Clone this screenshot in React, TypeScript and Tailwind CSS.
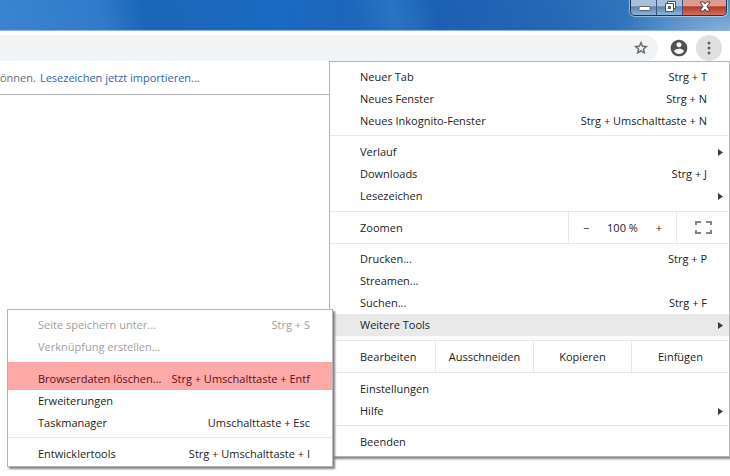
import React from "react";

type ItemProps = {
  label: string;
  shortcut?: string;
  submenu?: boolean;
  active?: boolean;
  disabled?: boolean;
};

function Arrow() {
  return (
    <svg className="absolute top-2 right-[6px] h-[7px] w-[5px]" viewBox="0 0 5 7" aria-hidden="true">
      <path d="M0 0v7l5-3.5z" fill="#3c3c3c" />
    </svg>
  );
}

function Item({ label, shortcut, submenu, active, disabled }: ItemProps) {
  return (
    <button
      type="button"
      role="menuitem"
      disabled={disabled}
      className={
        "relative flex h-[22px] w-full items-center justify-between pr-[22px] pl-[30px] " +
        (active ? "bg-[#e9e9e9] " : "") +
        (disabled ? "text-[#a0a0a0]" : "")
      }
    >
      <span>{label}</span>
      {shortcut && <span>{shortcut}</span>}
      {submenu && <Arrow />}
    </button>
  );
}

function Separator() {
  return <div role="separator" className="mt-[3px] mb-[5px] h-px bg-[#e8e8e8]" />;
}

function ToolsMenu() {
  return (
    <div
      role="menu"
      aria-label="Weitere Tools"
      className="absolute top-[309px] left-[7px] w-[326px] border border-[#b4b4b4] bg-white py-1 pb-px shadow-[2px_2px_2px_#808080]"
    >
      <Item label="Seite speichern unter..." shortcut="Strg + S" disabled />
      <Item label="Verknüpfung erstellen..." disabled />
      <div className="mt-1 bg-[#ffa8a8] pt-[6px] text-[#5a0f1c]">
        <Item label="Browserdaten löschen..." shortcut="Strg + Umschalttaste + Entf" />
      </div>
      <Item label="Erweiterungen" />
      <Item label="Taskmanager" shortcut="Umschalttaste + Esc" />
      <Separator />
      <Item label="Entwicklertools" shortcut="Strg + Umschalttaste + I" />
    </div>
  );
}

function MainMenu() {
  return (
    <div
      role="menu"
      aria-label="Menü"
      className="absolute top-[61px] right-0 w-[401px] border border-[#b4b4b4] bg-white pt-1 pb-[3px] shadow-[2px_2px_2px_#808080]"
    >
      <Item label="Neuer Tab" shortcut="Strg + T" />
      <Item label="Neues Fenster" shortcut="Strg + N" />
      <Item label="Neues Inkognito-Fenster" shortcut="Strg + Umschalttaste + N" />
      <Separator />
      <Item label="Verlauf" submenu />
      <Item label="Downloads" shortcut="Strg + J" />
      <Item label="Lesezeichen" submenu />
      <div className="my-1 flex h-[33px] items-stretch border-y border-[#e8e8e8]">
        <span className="flex flex-1 items-center pl-[30px]">Zoomen</span>
        <div className="flex w-[108px] items-center justify-between border-l border-[#e8e8e8] px-[14px]">
          <button type="button" aria-label="Verkleinern">−</button>
          <span>100 %</span>
          <button type="button" aria-label="Vergrößern">+</button>
        </div>
        <button
          type="button"
          aria-label="Vollbild"
          className="flex w-[53px] items-center justify-center border-l border-[#e8e8e8]"
        >
          <svg className="h-[13px] w-[17px]" viewBox="0 0 17 13" fill="none" stroke="#858585" strokeWidth="2" aria-hidden="true">
            <path d="M1 4V1h5M11 1h5v3M16 9v3h-5M6 12H1V9" />
          </svg>
        </button>
      </div>
      <Item label="Drucken..." shortcut="Strg + P" />
      <Item label="Streamen..." />
      <Item label="Suchen..." shortcut="Strg + F" />
      <Item label="Weitere Tools" submenu active />
      <div className="mt-1 mb-[5px] flex h-[33px] items-stretch border-y border-[#e8e8e8]">
        <span className="flex flex-1 items-center pl-[30px]">Bearbeiten</span>
        <button type="button" className="w-[98px] border-l border-[#e8e8e8]">Ausschneiden</button>
        <button type="button" className="w-[98px] border-l border-[#e8e8e8]">Kopieren</button>
        <button type="button" className="w-[98px] border-l border-[#e8e8e8]">Einfügen</button>
      </div>
      <Item label="Einstellungen" />
      <Item label="Hilfe" submenu />
      <Separator />
      <Item label="Beenden" />
    </div>
  );
}

function WindowControls() {
  return (
    <div className="mr-[3px] flex h-4 overflow-hidden rounded-b-[5px] border border-t-0 border-[#1d3350] shadow-[0_0_1px_1px_rgba(255,255,255,0.5)]">
      <button
        type="button"
        aria-label="Minimieren"
        className="flex w-[26px] items-center justify-center border-r border-[#3a587c] bg-linear-to-b from-[#a9c0da] from-40% via-[#5f84ae] via-45% to-[#8db4da]"
      >
        <svg className="h-[15px] w-4" viewBox="0 0 16 15" aria-hidden="true">
          <rect x="3" y="6.500" width="11" height="4" rx="0.500" fill="#fff" stroke="#5b6470" />
        </svg>
      </button>
      <button
        type="button"
        aria-label="Verkleinern"
        className="flex w-[26px] items-center justify-center border-r border-[#3a587c] bg-linear-to-b from-[#a9c0da] from-40% via-[#5f84ae] via-45% to-[#8db4da]"
      >
        <svg className="h-[15px] w-4" viewBox="0 0 16 15" aria-hidden="true">
          <path d="M5.500 1.500h8v7h-8z" fill="#fff" stroke="#4a5360" />
          <path d="M3.500 3.500h8v8h-8z" fill="#fff" stroke="#4a5360" />
          <path d="M6.500 6.500h2v2h-2z" fill="#5580b0" stroke="#4a5360" />
        </svg>
      </button>
      <button
        type="button"
        aria-label="Schließen"
        className="flex w-[43px] items-center justify-center bg-linear-to-b from-[#dc9a90] from-40% via-[#b83420] via-45% to-[#d4705a]"
      >
        <svg className="h-[15px] w-4" viewBox="0 0 16 15" aria-hidden="true">
          <path d="M3 2h3.700L8 4l1.300-2H13l-3 4.500 3 4.500H9.300L8 9l-1.300 2H3l3-4.500z" fill="#fff" stroke="#54494f" />
        </svg>
      </button>
    </div>
  );
}

export default function App() {
  return (
    <div className="relative min-h-screen w-full overflow-hidden bg-white font-['Open_Sans','Noto_Sans',sans-serif] text-[11px] leading-4 text-[#1c1c1c]">
      <header className="flex h-[31px] items-start justify-end border-b border-[#8db4e0] bg-[radial-gradient(ellipse_110px_34px_at_100%_100%,#86afd9,transparent),linear-gradient(75deg,#3a84d2_0%,#317cca_14%,#1a66b8_20%,#1a6ac2_38%,#1c66bb_48%,#2a74c4_54%,#1b60b2_60%,#2468b6_75%,#2f74bc_85%,#4585c6_100%)]">
        <WindowControls />
      </header>
      <div className="flex h-[30px] items-end">
        <div className="flex h-[26px] flex-1 items-center justify-end rounded-r-full bg-[#f1f3f4] pr-[9px]">
          <button type="button" aria-label="Lesezeichen hinzufügen">
            <svg className="size-4" viewBox="0 0 24 24" fill="#5f6368" stroke="#5f6368" strokeWidth="0.5" aria-hidden="true">
              <path d="M22 9.240l-7.190-.62L12 2 9.190 8.630 2 9.240l5.460 4.730L5.820 21 12 17.270 18.180 21l-1.630-7.030L22 9.240zM12 15.400l-3.760 2.270 1-4.280-3.320-2.880 4.380-.38L12 6.100l1.710 4.040 4.380.38-3.320 2.880 1 4.280L12 15.400z" />
            </svg>
          </button>
        </div>
        <div className="flex h-[26px] w-[72px] items-center justify-end gap-[7px] pr-2">
          <button type="button" aria-label="Profil">
            <svg className="size-5" viewBox="0 0 24 24" fill="#505256" aria-hidden="true">
              <path d="M12 2C6.480 2 2 6.480 2 12s4.480 10 10 10 10-4.480 10-10S17.520 2 12 2zm0 3c1.660 0 3 1.340 3 3s-1.340 3-3 3-3-1.340-3-3 1.340-3 3-3zm0 14.200c-2.500 0-4.710-1.280-6-3.220.03-1.990 4-3.080 6-3.080 1.990 0 5.970 1.090 6 3.080-1.290 1.940-3.500 3.220-6 3.220z" />
            </svg>
          </button>
          <button type="button" aria-label="Menü" className="flex size-[26px] items-center justify-center rounded-full bg-[#dfe0e1]">
            <svg className="h-3.5 w-1" viewBox="0 0 4 14" fill="#5f6368" aria-hidden="true">
              <circle cx="2" cy="2" r="1.500" />
              <circle cx="2" cy="7" r="1.500" />
              <circle cx="2" cy="12" r="1.500" />
            </svg>
          </button>
        </div>
      </div>
      <div className="flex h-[34px] items-center gap-1 border-b border-[#b4b4b4]">
        <span className="text-[#6b6b6b]">önnen.</span>
        <a href="#import" className="text-[#2f62b5]">Lesezeichen jetzt importieren...</a>
      </div>
      <MainMenu />
      <ToolsMenu />
    </div>
  );
}
